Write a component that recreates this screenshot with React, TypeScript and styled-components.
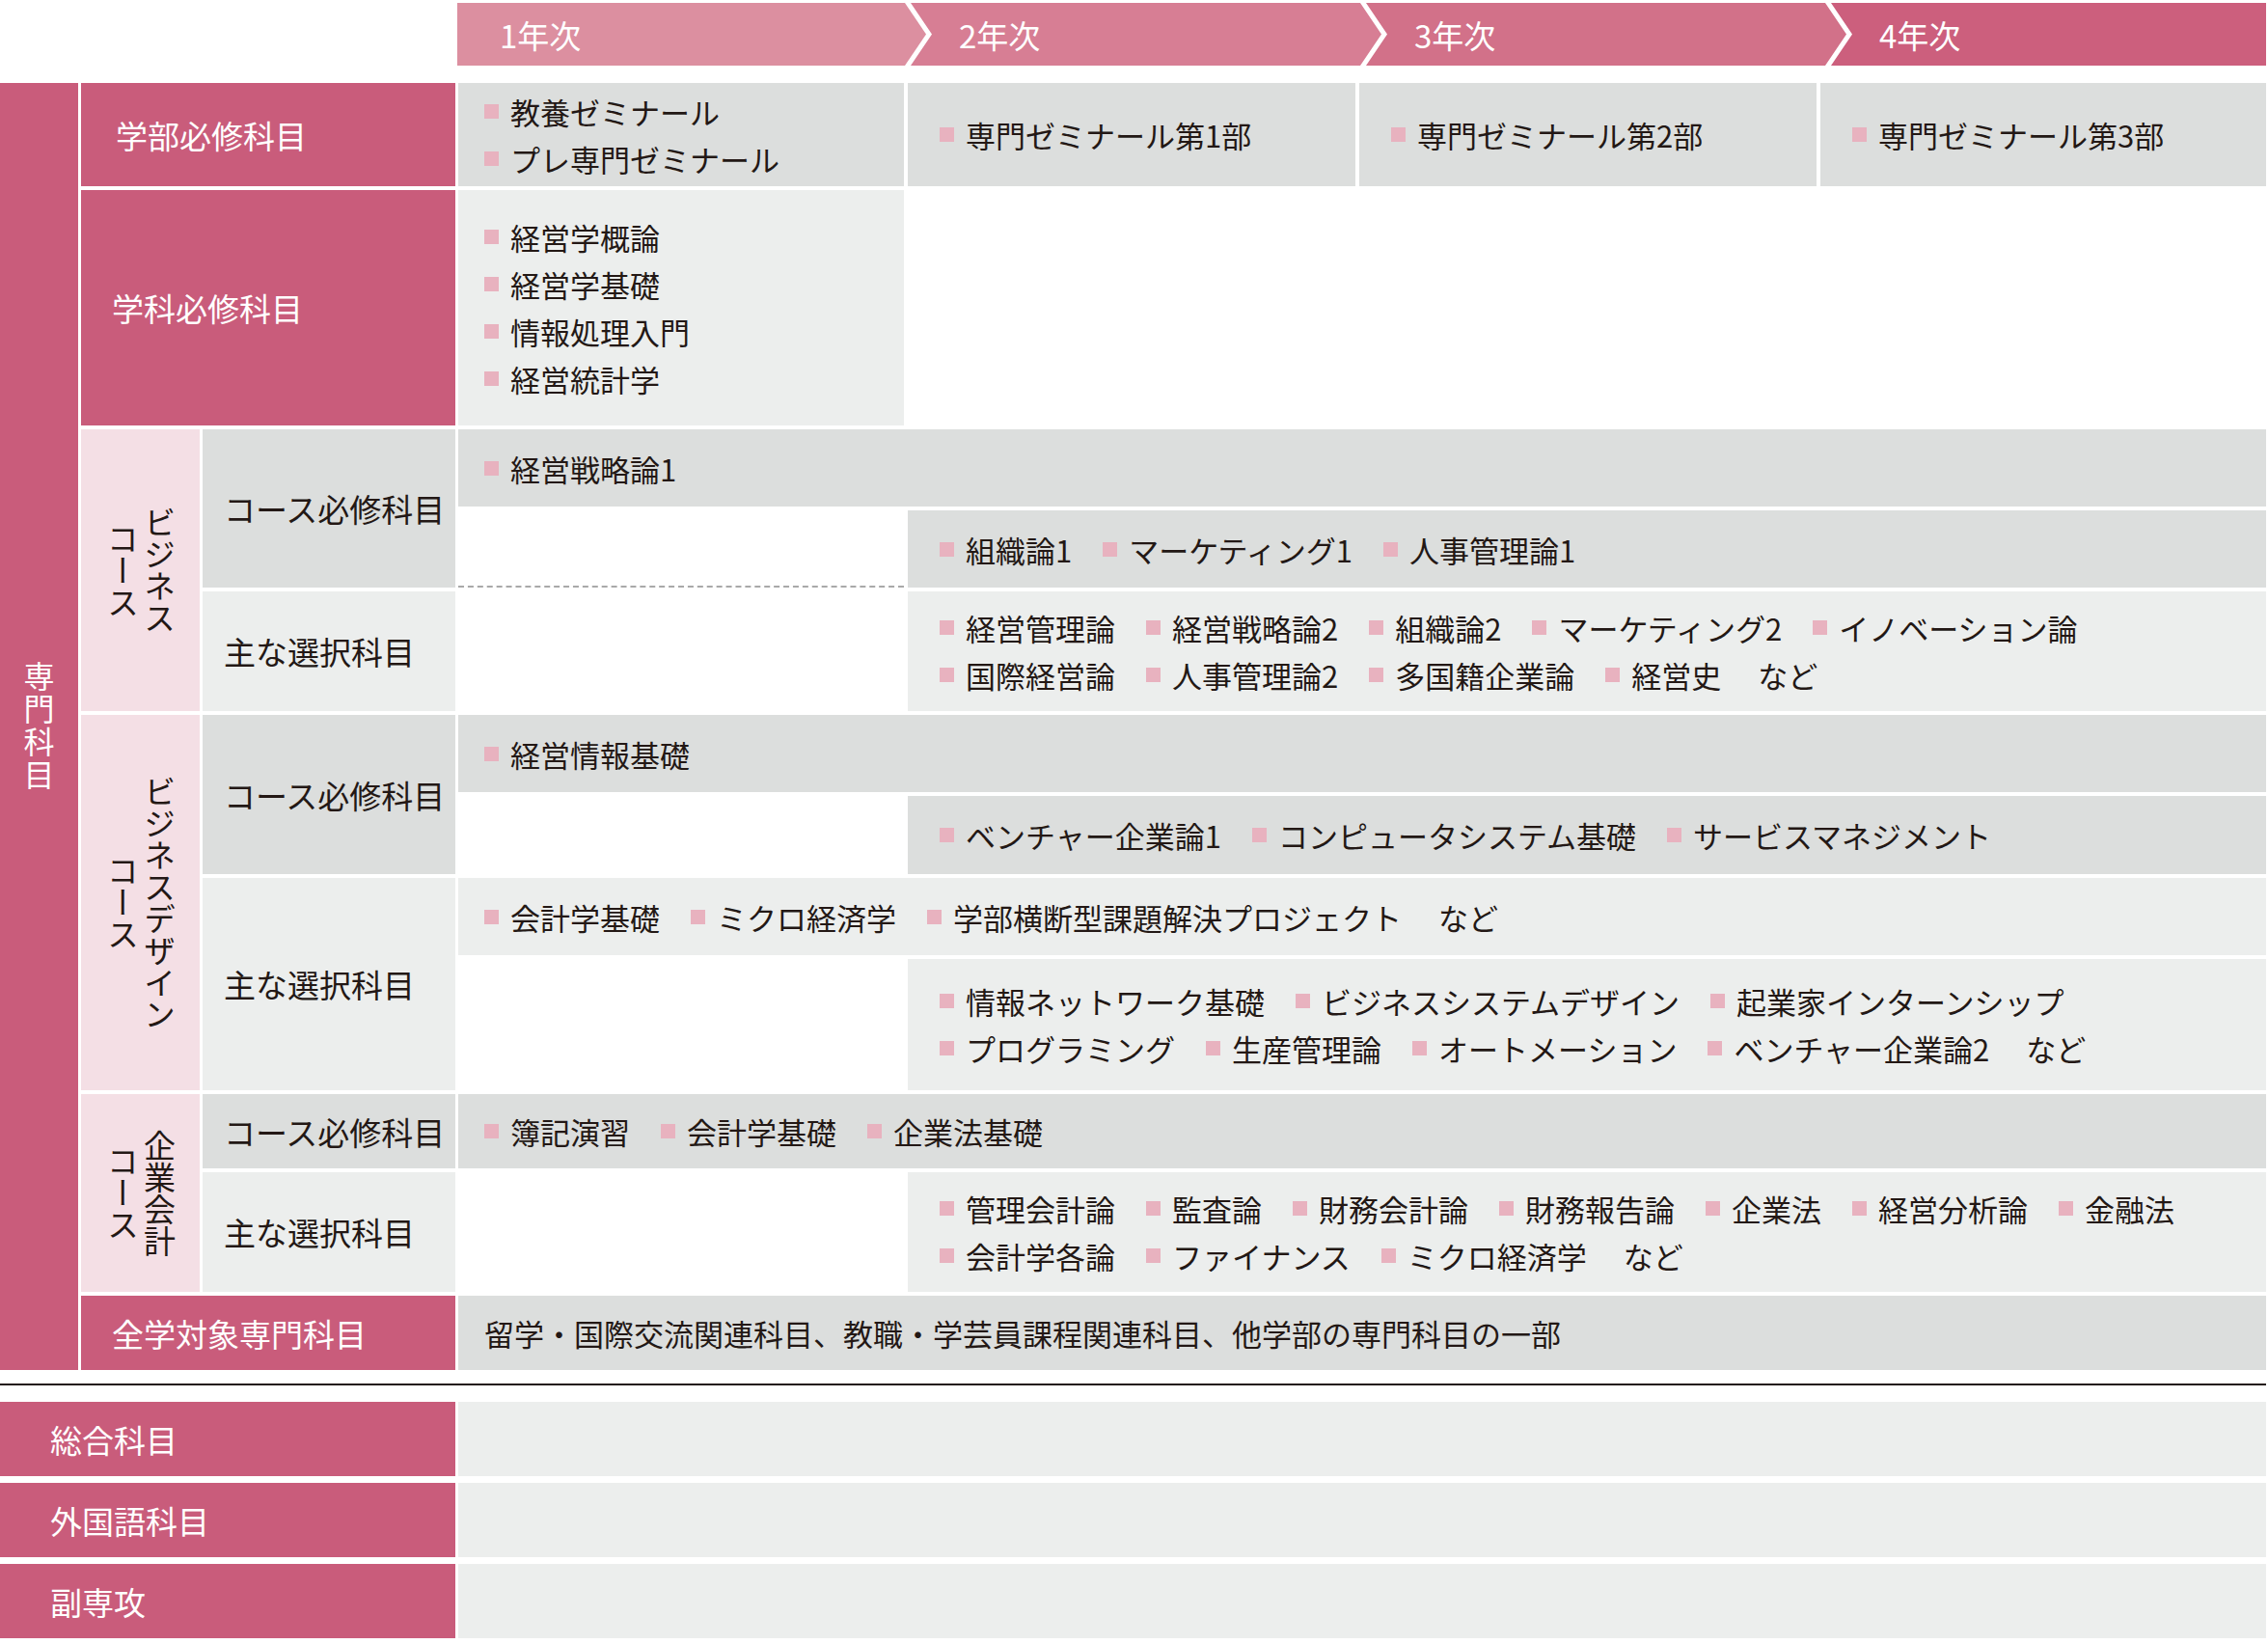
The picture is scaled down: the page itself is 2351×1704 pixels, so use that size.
import React from 'react'
import styled, { createGlobalStyle } from 'styled-components'

const GlobalStyle = createGlobalStyle`
  body {
    margin: 0;
    background: #fff;
    font-family: 'Noto Sans CJK JP', 'Noto Sans', sans-serif;
    color: #231815;
  }
`

const DARK = '#c95c7b'
const PALE = '#f4dfe5'
const GREY = '#dcdedd'
const LIGHT = '#eceeed'

const Page = styled.div`
  width: 2349px;
  padding-top: 3px;
`

const Header = styled.div`
  display: flex;
  margin-left: 474px;
  height: 65px;
`

const Step = styled.div<{ $bg: string; $first?: boolean; $last?: boolean; $w: number }>`
  flex: ${({ $last }) => ($last ? '1' : 'none')};
  width: ${({ $w, $last }) => ($last ? 'auto' : `${$w + 20}px`)};
  margin-right: ${({ $last }) => ($last ? '0' : '-16px')};
  background: ${({ $bg }) => $bg};
  clip-path: ${({ $first, $last }) => {
    const notch = $first ? '0 100%' : '0 100%, 22px 50%'
    const tip = $last ? '100% 0, 100% 100%' : 'calc(100% - 22px) 0, 100% 50%, calc(100% - 22px) 100%'
    return `polygon(0 0, ${tip}, ${notch})`
  }};
  display: flex;
  align-items: center;
  padding-left: ${({ $first }) => ($first ? '44px' : '50px')};
  box-sizing: border-box;
  color: #fff;
  font-size: 33px;
`

const Main = styled.div`
  margin-top: 18px;
  display: grid;
  grid-template-columns: 81px 123px 262px 1fr;
  grid-template-rows: 107px 244px 164px 124px 165px 220px 77px 124px 77px;
  column-gap: 3px;
  row-gap: 4px;
`

const SideBar = styled.div`
  grid-column: 1;
  grid-row: 1 / span 9;
  background: ${DARK};
  color: #fff;
  font-size: 32px;
  writing-mode: vertical-rl;
  display: flex;
  align-items: center;
  justify-content: center;
  letter-spacing: 2px;
`

const Label = styled.div<{ $tone: 'dark' | 'grey' | 'light'; $span?: boolean; $pad?: number }>`
  grid-column: ${({ $span }) => ($span ? '2 / span 2' : '3')};
  background: ${({ $tone }) => ($tone === 'dark' ? DARK : $tone === 'grey' ? GREY : LIGHT)};
  color: ${({ $tone }) => ($tone === 'dark' ? '#fff' : '#231815')};
  font-size: 33px;
  display: flex;
  align-items: center;
  padding-left: ${({ $pad }) => $pad ?? 22}px;
`

const Course = styled.div`
  grid-column: 2;
  grid-row: span 2;
  background: ${PALE};
  writing-mode: vertical-rl;
  text-align: center;
  display: flex;
  align-items: center;
  justify-content: center;
  font-size: 33px;
  line-height: 1.15;
  white-space: pre;
`

const Content = styled.div`
  grid-column: 4;
  display: flex;
  flex-direction: column;
  gap: 4px;
  min-height: 0;
`

const YearGrid = styled.div<{ $fill?: boolean }>`
  flex: ${({ $fill }) => ($fill ? 1 : 'none')};
  display: grid;
  grid-template-columns: 462px 464px 474px 1fr;
  column-gap: 4px;
  min-height: 0;
`

const Cell = styled.div<{ $from?: number; $to?: number; $bg?: string; $dashed?: boolean; $h?: number }>`
  grid-column: ${({ $from = 1, $to = 5 }) => `${$from} / ${$to}`};
  background: ${({ $bg }) => $bg ?? 'transparent'};
  height: ${({ $h }) => ($h ? `${$h}px` : 'auto')};
  display: flex;
  flex-direction: column;
  justify-content: center;
  padding-left: ${({ $from = 1 }) => ($from === 1 ? 27 : 33)}px;
  border-bottom: ${({ $dashed }) => ($dashed ? '2px dashed #a9a9a9' : 'none')};
  box-sizing: border-box;
  font-size: 31px;
  line-height: 49px;
`

const Line = styled.div`
  display: flex;
  gap: 32px;
  white-space: nowrap;
`

const Item = styled.span`
  display: inline-flex;
  align-items: center;
  &::before {
    content: '';
    width: 15px;
    height: 15px;
    background: #e8b2bf;
    margin-right: 12px;
  }
`

const Plain = styled.span`
  margin-left: 6px;
`

const Divider = styled.div`
  margin-top: 14px;
  height: 2px;
  background: #231815;
`

const Extra = styled.div`
  margin-top: 17px;
  display: grid;
  grid-template-columns: 472px 1fr;
  grid-auto-rows: 77px;
  column-gap: 3px;
  row-gap: 7px;
`

const ExtraLabel = styled.div`
  background: ${DARK};
  color: #fff;
  font-size: 33px;
  display: flex;
  align-items: center;
  padding-left: 52px;
`

const ExtraBody = styled.div`
  background: ${LIGHT};
`

const Items = ({ list, tail }: { list: string[]; tail?: string }) => (
  <Line>
    {list.map((t) => (
      <Item key={t}>{t}</Item>
    ))}
    {tail && <Plain>{tail}</Plain>}
  </Line>
)

export default function App() {
  return (
    <Page>
      <GlobalStyle />
      <Header>
        <Step $first $w={466} $bg="#dc8fa0">1年次</Step>
        <Step $w={468} $bg="#d77e94">2年次</Step>
        <Step $w={478} $bg="#d27189">3年次</Step>
        <Step $last $w={463} $bg="#cc5f7d">4年次</Step>
      </Header>

      <Main>
        <SideBar>専門科目</SideBar>

        <Label $tone="dark" $span $pad={36}>学部必修科目</Label>
        <Content>
          <YearGrid $fill>
            <Cell $from={1} $to={2} $bg={GREY}>
              <Items list={['教養ゼミナール']} />
              <Items list={['プレ専門ゼミナール']} />
            </Cell>
            <Cell $from={2} $to={3} $bg={GREY}><Items list={['専門ゼミナール第1部']} /></Cell>
            <Cell $from={3} $to={4} $bg={GREY}><Items list={['専門ゼミナール第2部']} /></Cell>
            <Cell $from={4} $to={5} $bg={GREY}><Items list={['専門ゼミナール第3部']} /></Cell>
          </YearGrid>
        </Content>

        <Label $tone="dark" $span $pad={32}>学科必修科目</Label>
        <Content>
          <YearGrid $fill>
            <Cell $from={1} $to={2} $bg={LIGHT}>
              <Items list={['経営学概論']} />
              <Items list={['経営学基礎']} />
              <Items list={['情報処理入門']} />
              <Items list={['経営統計学']} />
            </Cell>
          </YearGrid>
        </Content>

        <Course>{'ビジネス\nコース'}</Course>
        <Label $tone="grey">コース必修科目</Label>
        <Content>
          <YearGrid>
            <Cell $bg={GREY} $h={80}><Items list={['経営戦略論1']} /></Cell>
          </YearGrid>
          <YearGrid $fill>
            <Cell $from={1} $to={2} $dashed />
            <Cell $from={2} $bg={GREY}><Items list={['組織論1', 'マーケティング1', '人事管理論1']} /></Cell>
          </YearGrid>
        </Content>
        <Label $tone="light">主な選択科目</Label>
        <Content>
          <YearGrid $fill>
            <Cell $from={2} $to={5} $bg={LIGHT}>
              <Items list={['経営管理論', '経営戦略論2', '組織論2', 'マーケティング2', 'イノベーション論']} />
              <Items list={['国際経営論', '人事管理論2', '多国籍企業論', '経営史']} tail="など" />
            </Cell>
          </YearGrid>
        </Content>

        <Course>{'ビジネスデザイン\nコース'}</Course>
        <Label $tone="grey">コース必修科目</Label>
        <Content>
          <YearGrid>
            <Cell $bg={GREY} $h={80}><Items list={['経営情報基礎']} /></Cell>
          </YearGrid>
          <YearGrid $fill>
            <Cell $from={2} $bg={GREY}>
              <Items list={['ベンチャー企業論1', 'コンピュータシステム基礎', 'サービスマネジメント']} />
            </Cell>
          </YearGrid>
        </Content>
        <Label $tone="light">主な選択科目</Label>
        <Content>
          <YearGrid>
            <Cell $bg={LIGHT} $h={80}>
              <Items list={['会計学基礎', 'ミクロ経済学', '学部横断型課題解決プロジェクト']} tail="など" />
            </Cell>
          </YearGrid>
          <YearGrid $fill>
            <Cell $from={2} $bg={LIGHT}>
              <Items list={['情報ネットワーク基礎', 'ビジネスシステムデザイン', '起業家インターンシップ']} />
              <Items list={['プログラミング', '生産管理論', 'オートメーション', 'ベンチャー企業論2']} tail="など" />
            </Cell>
          </YearGrid>
        </Content>

        <Course>{'企業会計\nコース'}</Course>
        <Label $tone="grey">コース必修科目</Label>
        <Content>
          <YearGrid $fill>
            <Cell $bg={GREY}><Items list={['簿記演習', '会計学基礎', '企業法基礎']} /></Cell>
          </YearGrid>
        </Content>
        <Label $tone="light">主な選択科目</Label>
        <Content>
          <YearGrid $fill>
            <Cell $from={2} $bg={LIGHT}>
              <Items list={['管理会計論', '監査論', '財務会計論', '財務報告論', '企業法', '経営分析論', '金融法']} />
              <Items list={['会計学各論', 'ファイナンス', 'ミクロ経済学']} tail="など" />
            </Cell>
          </YearGrid>
        </Content>

        <Label $tone="dark" $span $pad={32}>全学対象専門科目</Label>
        <Content>
          <YearGrid $fill>
            <Cell $bg={GREY}>
              <Line>留学・国際交流関連科目、教職・学芸員課程関連科目、他学部の専門科目の一部</Line>
            </Cell>
          </YearGrid>
        </Content>
      </Main>

      <Divider />

      <Extra>
        <ExtraLabel>総合科目</ExtraLabel>
        <ExtraBody />
        <ExtraLabel>外国語科目</ExtraLabel>
        <ExtraBody />
        <ExtraLabel>副専攻</ExtraLabel>
        <ExtraBody />
      </Extra>
    </Page>
  )
}
